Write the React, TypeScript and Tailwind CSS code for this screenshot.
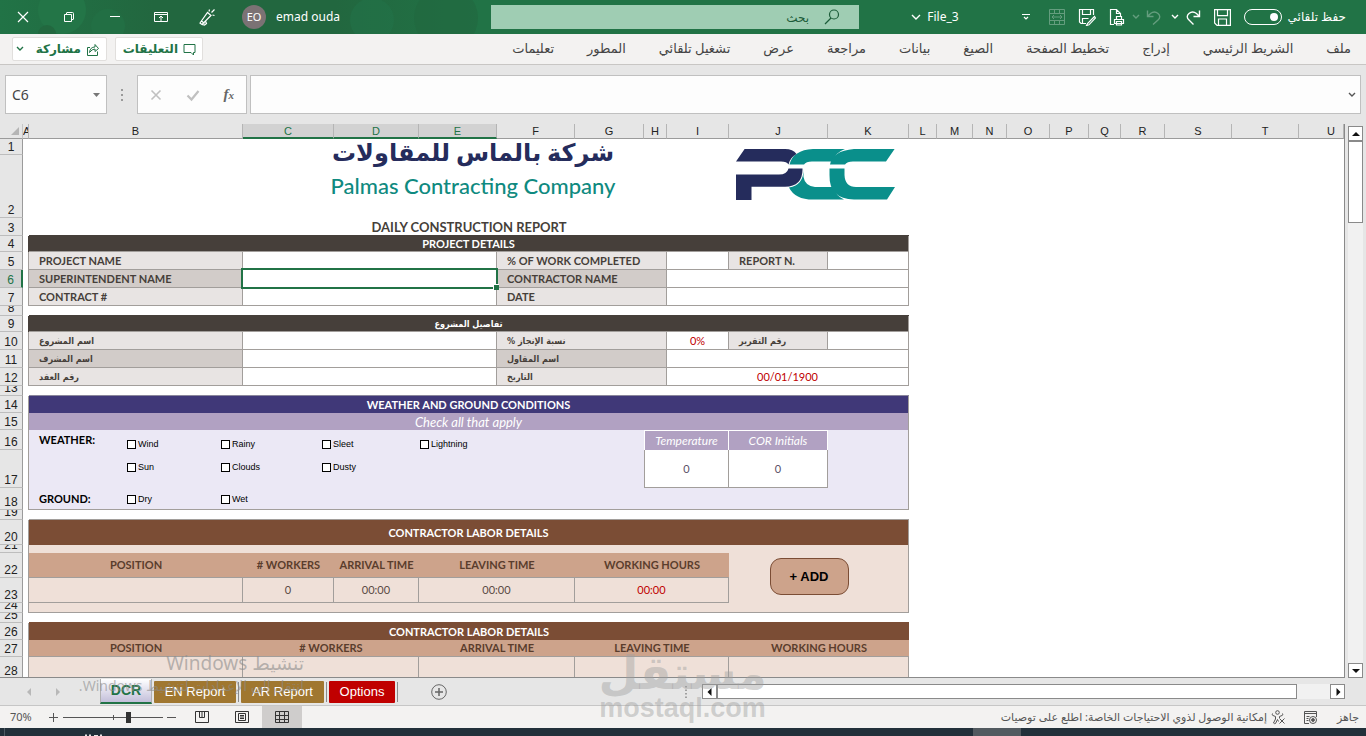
import type { ReactNode } from 'react';

const line = 'border-[#a29e9b]';
const label = 'bg-[#e8e4e3] text-[#463f3a] font-bold text-left pl-[10px]';
const labelAlt = 'bg-[#d2ccc9] text-[#463f3a] font-bold text-left pl-[10px]';
const arabic = "font-['DejaVu_Sans_Condensed','DejaVu_Sans',sans-serif] text-[9px]";

type CellProps = { span?: number; rows?: number; className?: string; edge?: boolean; children?: ReactNode };

function Cell({ span = 1, rows = 1, className = '', edge = true, children }: CellProps) {
  return (
    <td colSpan={span} rowSpan={rows} className={`p-0 ${edge ? `border-r border-b ${line}` : ''} ${className}`}>
      {children}
    </td>
  );
}

type RowProps = { n: number; h: string; selected?: boolean; edge?: string; children?: ReactNode };

function Row({ n, h, selected = false, edge = '', children }: RowProps) {
  return (
    <tr className={h}>
      <th scope="row" className="p-0 font-normal">
        <div
          className={`${h} flex items-end justify-center overflow-hidden border-b border-b-[#bdbdbd] text-[12px] leading-[13px] ${
            selected
              ? 'border-r-2 border-r-[#217346] bg-[#d2d2d2] text-[#217346]'
              : 'border-r border-r-[#9b9b9b] bg-[#e6e6e6] text-[#222222]'
          }`}
        >
          {n}
        </div>
      </th>
      <td className={`p-0 ${edge}`} />
      {children}
      <td colSpan={10} className="p-0" />
    </tr>
  );
}

const columns = [
  { name: 'A', w: 'w-[6px]' },
  { name: 'B', w: 'w-[214px]' },
  { name: 'C', w: 'w-[91px]', active: true },
  { name: 'D', w: 'w-[85px]', active: true },
  { name: 'E', w: 'w-[78px]', active: true },
  { name: 'F', w: 'w-[78px]' },
  { name: 'G', w: 'w-[69px]' },
  { name: 'H', w: 'w-[23px]' },
  { name: 'I', w: 'w-[62px]' },
  { name: 'J', w: 'w-[99px]' },
  { name: 'K', w: 'w-[81px]' },
  { name: 'L', w: 'w-[28px]' },
  { name: 'M', w: 'w-[36px]' },
  { name: 'N', w: 'w-[34px]' },
  { name: 'O', w: 'w-[43px]' },
  { name: 'P', w: 'w-[39px]' },
  { name: 'Q', w: 'w-[32px]' },
  { name: 'R', w: 'w-[44px]' },
  { name: 'S', w: 'w-[67px]' },
  { name: 'T', w: 'w-[67px]' },
  { name: 'U', w: '' },
];

function Svg({ size = 18, children, className = '' }: { size?: number; children: ReactNode; className?: string }) {
  return (
    <svg width={size} height={size} viewBox={`0 0 ${size} ${size}`} fill="none" stroke="currentColor" strokeWidth="1" className={`shrink-0 ${className}`} aria-hidden="true">
      {children}
    </svg>
  );
}

function Chevron({ className = '' }: { className?: string }) {
  return (
    <svg width="8" height="6" viewBox="0 0 8 6" fill="none" stroke="currentColor" strokeWidth="1.4" className={`shrink-0 ${className}`} aria-hidden="true">
      <path d="M1 1l3 3 3-3" />
    </svg>
  );
}

function TitleBar() {
  const win = 'flex h-full w-[46px] items-center justify-center';
  return (
    <header className="relative flex h-[34px] shrink-0 items-center overflow-hidden bg-[#217346] text-white">
      <div className="absolute inset-y-0 left-0 w-[480px]">
        <svg width="480" height="34" aria-hidden="true">
          <defs>
            <linearGradient id="shade">
              <stop offset="0" stopColor="#217346" />
              <stop offset=".32" stopColor="#22673f" />
              <stop offset=".7" stopColor="#22673f" />
              <stop offset="1" stopColor="#217346" />
            </linearGradient>
          </defs>
          <rect width="480" height="34" fill="url(#shade)" />
          <circle cx="62" cy="10" r="24" fill="#237547" />
          <circle cx="108" cy="26" r="17" fill="#226f44" />
          <circle cx="47" cy="34" r="9" fill="#22683f" />
          <circle cx="372" cy="20" r="22" fill="#22744a" opacity=".5" />
          <circle cx="446" cy="18" r="32" fill="#22673f" opacity=".6" />
        </svg>
      </div>
      <div className="relative flex h-full flex-[491] items-center">
        <button className={win} aria-label="Close"><Svg size={12}><path d="M1 1l10 10M11 1L1 11" strokeWidth="1.2" /></Svg></button>
        <button className={win} aria-label="Restore"><Svg size={12}><path d="M1.500 3.500h7v7h-7zM3.500 3.500v-1.500q0-.5.5-.5h5.500q1 0 1 1v5.500q0 .5-.5.5h-1.500" /></Svg></button>
        <button className={win} aria-label="Minimize"><Svg size={12}><path d="M1 5.500h10" /></Svg></button>
        <button className={win} aria-label="Ribbon display options"><Svg size={14}><path d="M.5 2.500h13v9H.5zM.5 4.500h13M7 11V6M5 8l2-2 2 2" /></Svg></button>
        <button className={win} aria-label="Try new features"><Svg size={18}><path d="M2 15L9.500 4.500l3.500 3L4 16.500zM3.500 13l3 2.500M4 16.500l2.500.5 2-1.500-1-2.500M11 3.500l.5-2M13.500 4.500l3-3M14.500 7l2 .5" strokeWidth="1.200" /></Svg></button>
        <span className="ml-3 flex size-6 items-center justify-center rounded-full bg-[#7b7274] text-[11px]">EO</span>
        <span className="ml-[10px] text-[12px]">emad ouda</span>
      </div>
      <label className="relative flex h-6 flex-[368] items-center bg-[#9fcdb3] text-[#1c5c39]" dir="rtl">
        <Svg size={18} className="mr-[18px]"><circle cx="11" cy="6.500" r="4.500" strokeWidth="1.200" /><path d="M8 10l-6 6" strokeWidth="1.200" /></Svg>
        <input aria-label="Search" placeholder="بحث" className="ml-2 mr-[14px] h-full min-w-0 flex-1 bg-transparent text-[12px] outline-none placeholder:text-[#1c5c39] placeholder:opacity-100" />
      </label>
      <div className="relative flex h-full flex-[507] items-center justify-end">
        <button className="mr-[63px] flex items-center gap-[6px] text-[12px]"><Svg size={10}><path d="M1 3l4 4 4-4" strokeWidth="1.400" /></Svg>File_3</button>
        <button className="mr-[18px]" aria-label="Customize"><Svg size={8}><path d="M0 1.500h8M2 4l2 2 2-2" strokeWidth="1.200" /></Svg></button>
        <button className="mr-[12px] opacity-30" aria-label="Merge cells"><Svg size={18}><path d="M1.500 1.500h15v15h-15zM1.500 5.500h15M1.500 12.500h15M6.500 1.500v4M11.500 1.500v4M6.500 12.500v4M11.500 12.500v4M4 9h10M6 7l-2 2 2 2M12 7l2 2-2 2" /></Svg></button>
        <button className="mr-[12px]" aria-label="Save as"><Svg size={18}><path d="M8 15.500H3l-1.500-1.500V1.500h14V7M4.500 1.500v5h8v-5M4.500 15.500v-5h6M16.500 8.500l-7 7-1 2 2.500-.7 6.500-6.800z" strokeWidth="1.200" /></Svg></button>
        <button className="mr-[6px]" aria-label="Print preview"><Svg size={18}><path d="M6 16.500H2.500v-15h6l4 4v3M8.500 1.500v4h4M8.500 11.500v-3h5v3M6.500 11.500h9v4h-9zM8.500 13.500h5v3.500h-5z" strokeWidth="1.200" /></Svg></button>
        <span className="mr-[9px] flex items-center gap-[6px] opacity-30"><Chevron /><Svg size={16}><path d="M1.500 1.500v6h6M1.500 7.500l3-3Q8.500 1.500 12 4.500T12 11l-5 4.500" strokeWidth="1.400" /></Svg></span>
        <button className="mr-[13px] flex items-center gap-[6px]" aria-label="Redo"><Chevron /><Svg size={16}><path d="M14.500 1.500v6h-6M14.500 7.500l-3-3Q7.500 1.500 4 4.500T4 11l4.500 4.500" strokeWidth="1.400" /></Svg></button>
        <button className="mr-[13px]" aria-label="Save"><Svg size={17}><path d="M.6.600h15.800v15.800H3L.6 14zM3.500.6v6h10v-6M4.500 16v-6h8v6" strokeWidth="1.200" /></Svg></button>
        <label className="mr-[20px] flex items-center gap-[6px] whitespace-nowrap text-[12px]">
          <span className="relative flex h-4 w-[38px] items-center">
            <input type="checkbox" defaultChecked className="size-full appearance-none rounded-full border border-white" />
            <span className="pointer-events-none absolute right-1 size-2 rounded-full bg-white" />
          </span>
          حفظ تلقائي
        </label>
      </div>
    </header>
  );
}

const tabs = ['ملف', 'الشريط الرئيسي', 'إدراج', 'تخطيط الصفحة', 'الصيغ', 'بيانات', 'مراجعة', 'عرض', 'تشغيل تلقائي', 'المطور', 'تعليمات'];

function Ribbon() {
  const box = 'flex h-[24px] items-center rounded-[2px] border border-[#e1dfdd] bg-white text-[12px] font-bold text-[#217346]';
  return (
    <div className="flex h-[31px] shrink-0 items-center justify-between border-b border-[#c8c6c4] bg-[#f3f2f1] pl-3 pr-[15px]">
      <div className="flex gap-2">
        <button className={`${box} w-[95px] justify-between px-[3px]`}>
          <Chevron className="text-[#217346]" />
          <span className="flex items-center gap-[5px] pr-[4px]">مشاركة
            <Svg size={13}><path d="M4 4.500H1.500v8h10v-4M3.500 9.500Q4 4 9 4V1.500l3.500 4L9 8.500V6Q6 6 3.500 9.500z" /></Svg>
          </span>
        </button>
        <button className={`${box} w-[88px] justify-end gap-[5px] pr-[6px]`}>التعليقات
          <Svg size={13}><path d="M1 1.500h11v8h-1.500v2.500L8 9.500H1z" /></Svg>
        </button>
      </div>
      <nav dir="rtl" className="flex gap-[33px] whitespace-nowrap text-[13px] text-[#444444]">
        {tabs.map((t) => <a key={t} href="#">{t}</a>)}
      </nav>
    </div>
  );
}

function FormulaBar() {
  return (
    <div className="flex h-[59px] shrink-0 items-center bg-[#e6e6e6] pl-[5px] pr-[5px]">
      <div className="flex h-[39px] w-[102px] items-center border border-[#c0c0c0] bg-[#fdfdfd] pl-[6px] pr-[6px]">
        <input aria-label="Name box" defaultValue="C6" className="min-w-0 flex-1 bg-transparent text-[14px] text-[#444444] outline-none" />
        <svg width="7" height="4" aria-hidden="true"><path d="M0 0h7L3.500 4z" fill="#777" /></svg>
      </div>
      <svg width="30" height="12" aria-hidden="true" fill="#9a9a9a"><path d="M14 0h2v2h-2zM14 5h2v2h-2zM14 10h2v2h-2z" /></svg>
      <div className="flex h-[39px] w-[110px] items-center justify-around border border-[#c0c0c0] bg-[#fdfdfd] text-[#c0c0c0]">
        <button aria-label="Cancel"><Svg size={12}><path d="M1.500 1.500l9 9M10.500 1.500l-9 9" strokeWidth="1.600" /></Svg></button>
        <button aria-label="Enter"><Svg size={14}><path d="M1.500 7.500l4 4 7-8.500" strokeWidth="2.200" /></Svg></button>
        <button aria-label="Insert function" className="font-['Liberation_Serif',serif] text-[15px] font-bold italic leading-none text-[#666666]">f<span className="text-[11px]">x</span></button>
      </div>
      <label className="ml-[3px] flex h-[39px] min-w-0 flex-1 items-center border border-[#c0c0c0] bg-[#fdfdfd] pr-[4px]">
        <input aria-label="Formula" className="h-full min-w-0 flex-1 bg-transparent outline-none" />
        <Chevron className="text-[#555555]" />
      </label>
    </div>
  );
}

function PccLogo() {
  return (
    <svg width="161" height="51" viewBox="0 0 161 51" aria-label="PCC" role="img">
      <g fill="#0a8f8b">
        <path d="M110 0H78Q58 1 54.500 15.500H69Q71 12.500 77 12.500H97Q101 3 110 0z" />
        <path d="M68.500 19.500Q69 36 54 38.500Q60 50.600 78 50.600H109Q101 47 98 38H80Q70 37 68.500 28z" />
        <path d="M159.600 0H119Q97 2 95 15.500H110Q112 12.500 118 12.500H151z" />
        <path d="M94.500 19.500H109.500V26Q110 38 121 38H160L152 50.600H119Q94 50 94.500 26z" />
      </g>
      <g fill="#252c5c">
        <path d="M9.600 0H50Q58 0 61.500 5Q55 8.500 53.500 15.500Q52 12.500 46 12.500H1z" />
        <path d="M1 25.500H44Q52 25.500 53.500 19.500H67.500Q68 37.500 50 37.700H16.500V51H1z" />
      </g>
    </svg>
  );
}

function Check({ name }: { name: string }) {
  return (
    <label className="flex items-center gap-[2px] font-['Liberation_Sans',sans-serif] text-[9px] leading-none text-black">
      <input type="checkbox" className="size-[9px] shrink-0 appearance-none border border-black bg-white" />
      {name}
    </label>
  );
}

function Sheet() {
  const dark = 'bg-[#463f3a] text-white font-bold text-center';
  const brown = 'bg-[#7b4d35] text-white font-bold text-center';
  const tan = 'bg-[#cda38b] text-[#5a3d2d] font-bold text-center';
  const cream = 'bg-[#efe0d8] text-[#5a4a44] text-center';
  const e = `border-r ${line}`;
  return (
    <table className="w-full table-fixed border-separate border-spacing-0 font-['Lato','DejaVu_Sans',sans-serif] text-[11px] leading-[12px]">
      <colgroup>
        <col className="w-[23px]" />
        {columns.map((c) => <col key={c.name} className={c.w} />)}
      </colgroup>
      <thead>
        <tr className="h-[15px] bg-[#e6e6e6] font-['Liberation_Sans',sans-serif] text-[#222222]">
          <td className="border-b border-r border-b-[#9b9b9b] border-r-[#c6c6c6] p-0">
            <svg width="8" height="8" className="ml-auto mr-[3px] block" aria-hidden="true"><path d="M8 0v8H0z" fill="#b5b5b5" /></svg>
          </td>
          {columns.map((c) => (
            <th
              key={c.name}
              scope="col"
              className={`overflow-hidden border-r border-r-[#b5b5b5] p-0 text-[11px] font-normal leading-[12px] ${
                c.active ? 'border-b-2 border-b-[#217346] bg-[#d2d2d2] text-[#217346]' : 'border-b border-b-[#9b9b9b]'
              } ${c.name === 'U' ? 'pr-[8px] text-right' : 'text-center'}`}
            >
              {c.name}
            </th>
          ))}
        </tr>
      </thead>
      <tbody className="[&_th]:font-['Liberation_Sans',sans-serif]">
        <Row n={1} h="h-[16px]">
          <Cell span={10} rows={2} edge={false} className="align-top">
            <div className="flex h-[70px] items-center justify-end gap-[117px] pr-[13px]">
              <div className="flex w-[290px] flex-col items-center whitespace-nowrap pb-[10px]">
                <span className="text-[24px] font-bold leading-[34px] text-[#252c5c]">شركة بالماس للمقاولات</span>
                <span className="text-[22px] font-medium leading-[34px] text-[#0f8a80]">Palmas Contracting Company</span>
              </div>
              <PccLogo />
            </div>
          </Cell>
        </Row>
        <Row n={2} h="h-[63px]" />
        <Row n={3} h="h-[18px]">
          <Cell span={10} edge={false} className="border-b border-[#463f3a] pb-[2px] text-center align-bottom text-[13px] font-bold text-[#463f3a]">DAILY CONSTRUCTION REPORT</Cell>
        </Row>
        <Row n={4} h="h-[16px]" edge="border-r border-[#463f3a]">
          <Cell span={10} className={dark}>PROJECT DETAILS</Cell>
        </Row>
        <Row n={5} h="h-[18px]" edge={e}>
          <Cell className={label}>PROJECT NAME</Cell>
          <Cell span={3} />
          <Cell span={3} className={label}>% OF WORK COMPLETED</Cell>
          <Cell />
          <Cell className={label}>REPORT N.</Cell>
          <Cell />
        </Row>
        <Row n={6} h="h-[18px]" selected edge={e}>
          <Cell className={labelAlt}>SUPERINTENDENT NAME</Cell>
          <Cell span={3} className="relative">
            <div className="pointer-events-none absolute -inset-x-[2px] -inset-y-[2px] border-2 border-[#217346]">
              <span className="absolute -bottom-[3px] -right-[3px] size-[6px] border-l border-t border-white bg-[#217346]" />
            </div>
          </Cell>
          <Cell span={3} className={labelAlt}>CONTRACTOR NAME</Cell>
          <Cell span={3} />
        </Row>
        <Row n={7} h="h-[18px]" edge={e}>
          <Cell className={label}>CONTRACT #</Cell>
          <Cell span={3} />
          <Cell span={3} className={label}>DATE</Cell>
          <Cell span={3} />
        </Row>
        <Row n={8} h="h-[10px]"><Cell span={10} edge={false} className="border-b border-[#463f3a]" /></Row>
        <Row n={9} h="h-[16px]" edge="border-r border-[#463f3a]">
          <Cell span={10} className={`${dark} ${arabic}`}>تفاصيل المشروع</Cell>
        </Row>
        <Row n={10} h="h-[18px]" edge={e}>
          <Cell className={`${label} ${arabic}`}>اسم المشروع</Cell>
          <Cell span={3} />
          <Cell span={3} className={`${label} ${arabic}`}>% نسبة الإنجاز</Cell>
          <Cell className="text-center text-[#c00000]">0%</Cell>
          <Cell className={`${label} ${arabic}`}>رقم التقرير</Cell>
          <Cell />
        </Row>
        <Row n={11} h="h-[18px]" edge={e}>
          <Cell className={`${labelAlt} ${arabic}`}>اسم المشرف</Cell>
          <Cell span={3} />
          <Cell span={3} className={`${labelAlt} ${arabic}`}>اسم المقاول</Cell>
          <Cell span={3} />
        </Row>
        <Row n={12} h="h-[18px]" edge={e}>
          <Cell className={`${label} ${arabic}`}>رقم العقد</Cell>
          <Cell span={3} />
          <Cell span={3} className={`${label} ${arabic}`}>التاريخ</Cell>
          <Cell span={3} className="text-center text-[#c00000]">00/01/1900</Cell>
        </Row>
        <Row n={13} h="h-[10px]"><Cell span={10} edge={false} className="border-b border-[#8a869c]" /></Row>
        <Row n={14} h="h-[17px]" edge={e}>
          <Cell span={10} edge={false} className={`border-r bg-[#403878] text-center font-bold text-white ${line}`}>WEATHER AND GROUND CONDITIONS</Cell>
        </Row>
        <Row n={15} h="h-[17px]" edge={e}>
          <Cell span={10} edge={false} className={`border-r bg-[#b1a1c2] text-center text-[13px] italic text-white ${line}`}>Check all that apply</Cell>
        </Row>
        <Row n={16} h="h-[20px]" edge={e}>
          <Cell span={6} rows={3} edge={false} className={`border-b bg-[#ebe8f5] align-top ${line}`}>
            <div className="grid grid-cols-[88px_94px_101px_98px_1fr] grid-rows-[28px_18px_33px] items-center pl-[10px]">
              <strong className="pb-[8px]">WEATHER:</strong>
              <Check name="Wind" /><Check name="Rainy" /><Check name="Sleet" /><Check name="Lightning" />
              <span />
              <Check name="Sun" /><Check name="Clouds" /><Check name="Dusty" /><span />
              <strong className="pt-[12px]">GROUND:</strong>
              <div className="pt-[14px]"><Check name="Dry" /></div>
              <div className="pt-[14px]"><Check name="Wet" /></div>
            </div>
          </Cell>
          <Cell span={2} edge={false} className="border-x border-t border-white bg-[#b1a1c2] text-center text-[12px] italic text-white">Temperature</Cell>
          <Cell edge={false} className="border-r border-t border-white bg-[#b1a1c2] text-center text-[12px] italic text-white">COR Initials</Cell>
          <Cell rows={3} className="bg-[#ebe8f5]" />
        </Row>
        <Row n={17} h="h-[38px]" edge={e}>
          <Cell span={2} className="border-l bg-white text-center text-[#5a4f66]">0</Cell>
          <Cell className="bg-white text-center text-[#5a4f66]">0</Cell>
        </Row>
        <Row n={18} h="h-[22px]" edge={e}>
          <Cell span={3} edge={false} className={`border-b bg-[#ebe8f5] ${line}`} />
        </Row>
        <Row n={19} h="h-[10px]"><Cell span={10} edge={false} className={`border-b ${line}`} /></Row>
        <Row n={20} h="h-[25px]" edge={e}>
          <Cell span={10} edge={false} className={`border-r ${line} ${brown}`}>CONTRACTOR LABOR DETAILS</Cell>
        </Row>
        <Row n={21} h="h-[8px]" edge={e}>
          <Cell span={8} edge={false} className="bg-[#efe0d8]" />
          <Cell span={2} rows={4} className="bg-[#efe0d8] align-top">
            <div className="flex h-[63px] items-center justify-center pr-[19px]">
              <button className="h-[37px] w-[79px] rounded-[11px] border border-[#7b4d35] bg-[#cda38b] font-['Liberation_Sans',sans-serif] text-[13px] font-bold text-black">+ ADD</button>
            </div>
          </Cell>
        </Row>
        <Row n={22} h="h-[25px]" edge={e}>
          <Cell edge={false} className={`border-b ${line} ${tan}`}>POSITION</Cell>
          <Cell edge={false} className={`border-b ${line} ${tan}`}># WORKERS</Cell>
          <Cell edge={false} className={`border-b ${line} ${tan}`}>ARRIVAL TIME</Cell>
          <Cell span={2} edge={false} className={`border-b ${line} ${tan}`}>LEAVING TIME</Cell>
          <Cell span={3} edge={false} className={`border-b ${line} ${tan}`}>WORKING HOURS</Cell>
        </Row>
        <Row n={23} h="h-[25px]" edge={e}>
          <Cell className={cream} />
          <Cell className={cream}>0</Cell>
          <Cell className={cream}>00:00</Cell>
          <Cell span={2} className={cream}>00:00</Cell>
          <Cell span={3} className="bg-[#efe0d8] text-center text-[#c00000]">00:00</Cell>
        </Row>
        <Row n={24} h="h-[10px]" edge={e}><Cell span={8} edge={false} className={`border-b bg-[#efe0d8] ${line}`} /></Row>
        <Row n={25} h="h-[10px]"><Cell span={10} edge={false} className="border-b border-[#7b4d35]" /></Row>
        <Row n={26} h="h-[17px]" edge={e}>
          <Cell span={10} edge={false} className={brown}>CONTRACTOR LABOR DETAILS</Cell>
        </Row>
        <Row n={27} h="h-[17px]" edge={e}>
          <Cell edge={false} className={`border-b ${line} ${tan}`}>POSITION</Cell>
          <Cell span={2} edge={false} className={`border-b ${line} ${tan}`}># WORKERS</Cell>
          <Cell span={2} edge={false} className={`border-b ${line} ${tan}`}>ARRIVAL TIME</Cell>
          <Cell span={3} edge={false} className={`border-b ${line} ${tan}`}>LEAVING TIME</Cell>
          <Cell span={2} edge={false} className={`border-b ${line} ${tan}`}>WORKING HOURS</Cell>
        </Row>
        <Row n={28} h="h-[22px]" edge={e}>
          <Cell className={cream} />
          <Cell span={2} className={cream} />
          <Cell span={2} className={cream} />
          <Cell span={3} className={cream} />
          <Cell span={2} className={cream} />
        </Row>
      </tbody>
    </table>
  );
}

function ScrollButton({ name, d }: { name: string; d: string }) {
  return (
    <button aria-label={name} className="flex size-[15px] shrink-0 items-center justify-center border border-[#8a8a8a] bg-white">
      <svg width="8" height="8" aria-hidden="true"><path d={d} fill="#111" /></svg>
    </button>
  );
}

function SheetTabs() {
  const tab = 'h-[22px] rounded-[1px] text-[13px] text-white';
  return (
    <div className="flex h-[28px] shrink-0 items-center border-b border-[#c6c6c6] bg-[#e6e6e6] font-['Liberation_Sans',sans-serif]">
      <div className="flex flex-[702] items-center">
        <svg width="100" height="10" aria-hidden="true" fill="#b8b8b8"><path d="M31 1v8l-4-4zM56 1v8l4-4z" /></svg>
        <button className="h-[25px] w-[52px] border-x border-b-2 border-x-[#b0b0b0] border-b-[#217346] bg-linear-to-b from-white to-[#c3bfda] text-[14px] font-bold text-[#217346]">DCR</button>
        <button className={`${tab} ml-[2px] w-[82px] bg-[#a07730]`}>EN Report</button>
        <span className="mx-[2px] h-[20px] w-px bg-[#8a8a8a]" />
        <button className={`${tab} w-[83px] bg-[#a07730]`}>AR Report</button>
        <span className="mx-[2px] h-[20px] w-px bg-[#8a8a8a]" />
        <button className={`${tab} w-[66px] bg-[#c00000]`}>Options</button>
        <span className="mx-[2px] h-[20px] w-px bg-[#8a8a8a]" />
        <button aria-label="New sheet" className="ml-[31px] text-[#666666]"><Svg size={16}><circle cx="8" cy="8" r="7.300" /><path d="M8 4v8M4 8h8" strokeWidth="1.500" /></Svg></button>
        <svg width="2" height="12" className="ml-auto mr-[15px]" aria-hidden="true" fill="#a0a0a0"><path d="M0 0h2v1.500H0zM0 3.500h2V5H0zM0 7h2v1.500H0zM0 10.500h2V12H0z" /></svg>
      </div>
      <div className="flex flex-[643] items-center bg-[#f1f1f1]">
        <ScrollButton name="Scroll left" d="M5.500 0v8L1.500 4z" />
        <div className="h-[15px] flex-[580] border border-[#8a8a8a] bg-white" />
        <div className="flex-[33]" />
        <ScrollButton name="Scroll right" d="M2.500 0v8l4-4z" />
      </div>
      <div className="w-[21px]" />
    </div>
  );
}

function StatusBar() {
  return (
    <footer className="flex h-[22px] shrink-0 items-center justify-between bg-[#f3f2f1] pl-[10px] pr-[7px] text-[11px] text-[#555555]">
      <div className="flex h-full items-center">
        <span className="w-[38px]">70%</span>
        <button aria-label="Zoom in"><Svg size={11}><path d="M1 5.500h9M5.500 1v9" /></Svg></button>
        <label className="relative mx-[4px] flex h-full w-[100px] items-center">
          <input aria-label="Zoom" type="range" defaultValue="66" className="h-px w-full appearance-none bg-[#555555] [&::-webkit-slider-thumb]:h-[11px] [&::-webkit-slider-thumb]:w-[5px] [&::-webkit-slider-thumb]:appearance-none [&::-webkit-slider-thumb]:bg-[#333333]" />
          <span className="absolute left-1/2 h-[5px] w-px bg-[#555555]" />
        </label>
        <button aria-label="Zoom out"><Svg size={9}><path d="M0 4.500h9" /></Svg></button>
        <button aria-label="Page break preview" className="ml-[6px] flex h-full w-[40px] items-center justify-center text-[#333333]"><Svg size={14}><path d="M.5 1.500h13v11H.5zM4.500 1.500v6h5v-6M7 1.500v6" /></Svg></button>
        <button aria-label="Page layout" className="flex h-full w-[40px] items-center justify-center text-[#333333]"><Svg size={14}><path d="M.5 1.500h13v11H.5zM3.500 3.500h7v7h-7zM5 5.500h4M5 7h4M5 8.500h4" /></Svg></button>
        <button aria-label="Normal view" className="flex h-full w-[40px] items-center justify-center bg-[#cfcdcc] text-[#333333]"><Svg size={14}><path d="M.5 1.500h13v11H.5zM4.500 1.500v11M9.500 1.500v11M.5 5.500h13M.5 9.500h13" /></Svg></button>
      </div>
      <div className="flex items-center whitespace-nowrap" dir="rtl">
        <span>جاهز</span>
        <Svg size={15} className="mr-[19px]"><path d="M6 13.500H1.500v-12h12V7M1.500 3.500h12M3.500 6.500h3M3.500 8.500h2M3.500 10.500h2" /><circle cx="10" cy="10" r="3.500" /><circle cx="10" cy="10" r="1.400" fill="currentColor" /></Svg>
        <Svg size={15} className="mr-[17px]"><circle cx="6.500" cy="2.500" r="1.800" /><path d="M1.500 3.500q-1 1.500.5 2l2.500 1v2.500l-2 4q1 1 2 .5l2-4 1 2M11.500 3.500q1 1.500-.5 2l-2.500 1v1.500M8.500 8.500l5 5M13.500 8.500l-5 5" /></Svg>
        <span className="mr-[4px]">إمكانية الوصول لذوي الاحتياجات الخاصة: اطلع على توصيات</span>
      </div>
    </footer>
  );
}

export default function App() {
  return (
    <div className="relative flex h-screen flex-col overflow-hidden bg-[#e6e6e6] font-['Noto_Sans','DejaVu_Sans',sans-serif]">
      <TitleBar />
      <Ribbon />
      <FormulaBar />
      <main className="flex min-h-0 flex-1">
        <div className="min-w-0 flex-1 overflow-hidden border-b border-r border-[#8a8a8a] bg-white"><Sheet /></div>
        <div className="ml-[3px] mr-[3px] mt-[2px] flex w-[15px] flex-col bg-[#f1f1f1]">
          <ScrollButton name="Scroll up" d="M0 6h8L4 2z" />
          <div className="h-[82px] border border-[#8a8a8a] bg-white" />
          <div className="flex-1" />
          <ScrollButton name="Scroll down" d="M0 2h8L4 6z" />
        </div>
      </main>
      <SheetTabs />
      <StatusBar />
      <div className="flex h-[8px] shrink-0 bg-[#22303a]">
        <div className="flex-[973]">
          <svg width="120" height="8" aria-hidden="true"><path d="M4.500 0v8" stroke="#4d5a63" /><path d="M85 6.500h2v1.500h-2zM89 6.500h2v1.500h-2zM94 7h4v1h-4zM100 6.500h2v1.500h-2z" fill="#e8e8e8" /></svg>
        </div>
        <div className="flex-[48] bg-[#525a60]" />
        <div className="flex-[345]" />
      </div>
      <div className="pointer-events-none absolute bottom-[40px] left-[69px] w-[235px] whitespace-nowrap text-[#8c8c8c]/60" dir="rtl">
        <p className="text-[19px] leading-[26px]">تنشيط Windows</p>
        <p className="text-[14px] leading-[20px]">انتقل إلى الإعدادات لتنشيط Windows.</p>
      </div>
      <div className="pointer-events-none absolute bottom-[14px] left-[600px] flex w-[165px] flex-col items-center whitespace-nowrap font-['Liberation_Sans','DejaVu_Sans',sans-serif] font-bold text-[#a0a0a0]/45">
        <span className="text-[46px] leading-[42px]">مستقل</span>
        <span className="text-[27px] leading-[28px]">mostaql.com</span>
      </div>
    </div>
  );
}
